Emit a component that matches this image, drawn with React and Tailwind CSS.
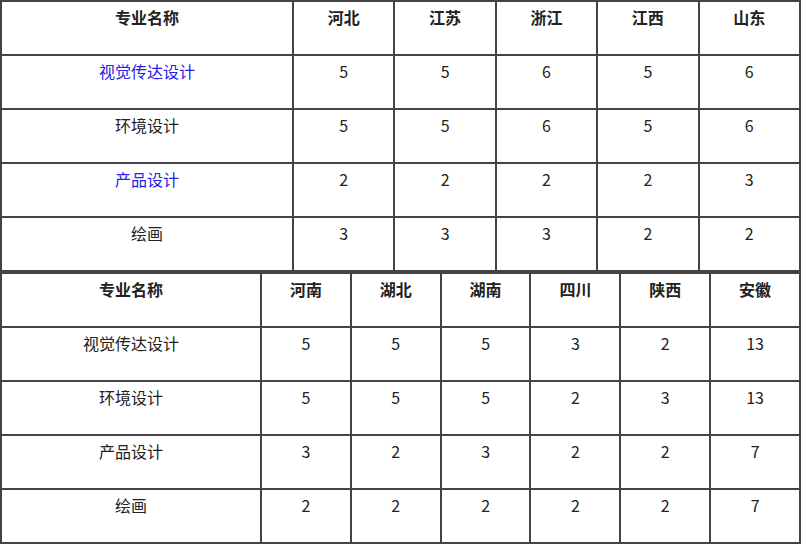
import React from "react";

const top = {
  cols: ["河北", "江苏", "浙江", "江西", "山东"],
  first: 292,
  rows: [
    { name: "视觉传达设计", link: true, v: [5, 5, 6, 5, 6] },
    { name: "环境设计", v: [5, 5, 6, 5, 6] },
    { name: "产品设计", link: true, v: [2, 2, 2, 2, 3] },
    { name: "绘画", v: [3, 3, 3, 2, 2] },
  ],
};

const bottom = {
  cols: ["河南", "湖北", "湖南", "四川", "陕西", "安徽"],
  first: 260,
  rows: [
    { name: "视觉传达设计", v: [5, 5, 5, 3, 2, 13] },
    { name: "环境设计", v: [5, 5, 5, 2, 3, 13] },
    { name: "产品设计", v: [3, 2, 3, 2, 2, 7] },
    { name: "绘画", v: [2, 2, 2, 2, 2, 7] },
  ],
};

const cell = "border border-[#444] h-[54px] align-top text-center pt-[3px] leading-6";

function ScoreTable({ data }) {
  return (
    <table className="w-[801px] table-fixed border border-[#444] border-separate border-spacing-0">
      <colgroup>
        <col style={{ width: data.first }} />
        {data.cols.map((c) => (
          <col key={c} />
        ))}
      </colgroup>
      <thead>
        <tr>
          <th className={cell + " font-bold"}>专业名称</th>
          {data.cols.map((c) => (
            <th key={c} className={cell + " font-bold"}>
              {c}
            </th>
          ))}
        </tr>
      </thead>
      <tbody>
        {data.rows.map((r) => (
          <tr key={r.name}>
            <td className={cell + (r.link ? " text-[#2222ee]" : "")}>{r.name}</td>
            {r.v.map((n, i) => (
              <td key={i} className={cell}>
                {n}
              </td>
            ))}
          </tr>
        ))}
      </tbody>
    </table>
  );
}

export default function App() {
  return (
    <div className="w-[804px] h-[546px] bg-white text-[#222] text-[16px] font-['Noto_Sans_CJK_SC','Noto_Sans',sans-serif]">
      <ScoreTable data={top} />
      <ScoreTable data={bottom} />
    </div>
  );
}
